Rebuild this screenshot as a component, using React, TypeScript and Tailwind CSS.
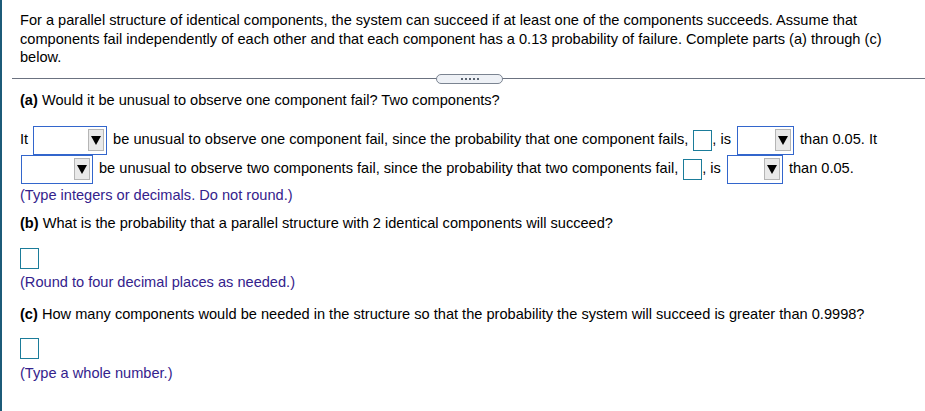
import React from "react";

function Dropdown({ w }: { w: number }) {
  return (
    <span
      className="inline-flex items-start justify-end border border-[#3366cc] bg-white h-[29px] pt-[2px] pr-[2px] align-middle shrink-0"
      style={{ width: w }}
    >
      <span className="w-[16px] h-[22px] bg-[#e9e9e9] border border-[#b5b5b5] flex items-center justify-center">
        <svg width="10" height="10" viewBox="0 0 10 10">
          <polygon points="0,1 10,1 5,10" fill="#000" />
        </svg>
      </span>
    </span>
  );
}

function Box() {
  return <span className="inline-block w-[19px] h-[21px] border border-[#1b7c9a] bg-white align-middle shrink-0" />;
}

export default function App() {
  return (
    <div
      className="w-[925px] h-[411px] bg-white border-l-2 border-[#1c5b78] text-[14.6px] text-black overflow-hidden"
      style={{ fontFamily: '"Liberation Sans", Arial, sans-serif' }}
    >
      <div className="pl-[18px] pr-2 pt-[11px] leading-[18.5px] whitespace-nowrap">
        For a parallel structure of identical components, the system can succeed if at least one of the components succeeds. Assume that
        <br />
        components fail independently of each other and that each component has a 0.13 probability of failure. Complete parts (a) through (c)
        <br />
        below.
      </div>

      <div className="relative ml-[10px] mt-[7px] h-[10px] flex items-center">
        <div className="w-full h-px bg-[#6b7280]" />
        <div className="absolute left-[424px] top-0 w-[67px] h-[10px] rounded-[5px] border border-[#7b8491] bg-[#eef1f6] flex items-center justify-center gap-[2px]">
          {[0, 1, 2, 3, 4].map((i) => (
            <span key={i} className="w-[2px] h-[2px] bg-[#5a6370]" />
          ))}
        </div>
      </div>

      <div className="pl-[18px]">
        <div className="mt-[7px] leading-[18px]">
          <b>(a)</b> Would it be unusual to observe one component fail? Two components?
        </div>

        <div className="mt-[17px] flex items-center h-[29px] whitespace-nowrap">
          <span>It</span>
          <span className="ml-[5px]"><Dropdown w={74} /></span>
          <span className="ml-[6px]">be unusual to observe one component fail, since the probability that one component fails,</span>
          <span className="ml-[5px]"><Box /></span>
          <span>, is</span>
          <span className="ml-[6px]"><Dropdown w={57} /></span>
          <span className="ml-[6px]">than 0.05. It</span>
        </div>
        <div className="flex items-center h-[29px] whitespace-nowrap">
          <span className="ml-[1px]"><Dropdown w={72} /></span>
          <span className="ml-[6px]">be unusual to observe two components fail, since the probability that two components fail,</span>
          <span className="ml-[5px]"><Box /></span>
          <span>, is</span>
          <span className="ml-[6px]"><Dropdown w={56} /></span>
          <span className="ml-[6px]">than 0.05.</span>
        </div>
        <div className="mt-[2px] leading-[18px] text-[#34228c]">(Type integers or decimals. Do not round.)</div>

        <div className="mt-[10px] leading-[18px]">
          <b>(b)</b> What is the probability that a parallel structure with 2 identical components will succeed?
        </div>
        <div className="mt-[16px] h-[21px] flex">
          <Box />
        </div>
        <div className="mt-[4px] leading-[18px] text-[#34228c]">(Round to four decimal places as needed.)</div>

        <div className="mt-[14px] leading-[18px]">
          <b>(c)</b> How many components would be needed in the structure so that the probability the system will succeed is greater than 0.9998?
        </div>
        <div className="mt-[15px] h-[21px] flex">
          <Box />
        </div>
        <div className="mt-[5px] leading-[18px] text-[#34228c]">(Type a whole number.)</div>
      </div>
    </div>
  );
}
